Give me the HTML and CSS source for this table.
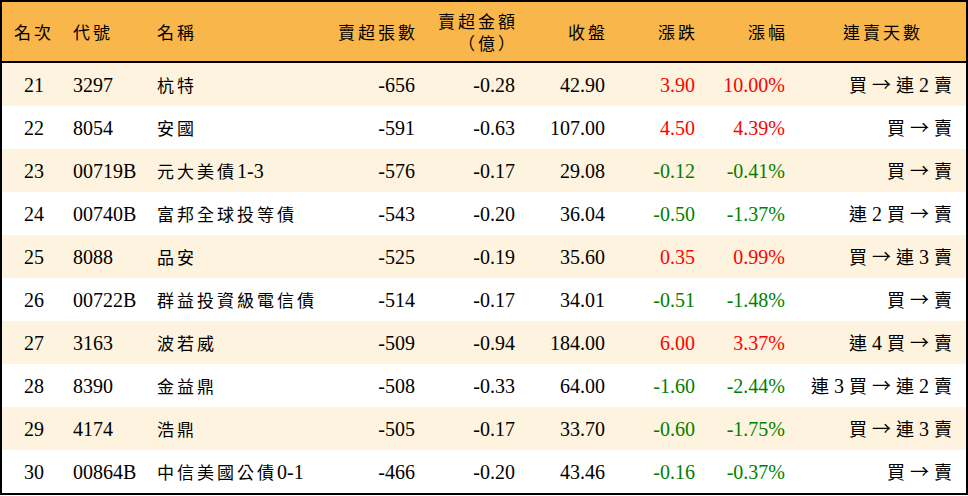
FILE: index.html
```html
<!DOCTYPE html>
<html lang="zh-Hant">
<head>
<meta charset="utf-8">
<title>賣超排行</title>
<link rel="stylesheet" href="styles.css">
</head>
<body>
<table class="rank">
  <colgroup>
    <col class="c-rank"><col class="c-code"><col class="c-name"><col class="c-vol"><col class="c-amt"><col class="c-close"><col class="c-chg"><col class="c-pct"><col class="c-days">
  </colgroup>
  <thead>
    <tr>
      <th class="ctr"><span class="zh">名次</span></th>
      <th class="lft"><span class="zh">代號</span></th>
      <th class="lft"><span class="zh">名稱</span></th>
      <th class="rgt"><span class="zh">賣超張數</span></th>
      <th class="rgt two"><span class="zh">賣超金額</span><br><span class="zh">（億）</span></th>
      <th class="rgt"><span class="zh">收盤</span></th>
      <th class="rgt"><span class="zh">漲跌</span></th>
      <th class="rgt"><span class="zh">漲幅</span></th>
      <th class="ctr"><span class="zh">連賣天數</span></th>
    </tr>
  </thead>
  <tbody>
    <tr class="alt">
      <td class="ctr">21</td><td class="lft">3297</td><td class="lft"><span class="zh">杭特</span></td>
      <td class="rgt">-656</td><td class="rgt">-0.28</td><td class="rgt">42.90</td>
      <td class="rgt up">3.90</td><td class="rgt up">10.00%</td>
      <td class="rgt days"><span class="zh">買</span> <span class="arr">→</span> <span class="zh">連</span> 2 <span class="zh">賣</span></td>
    </tr>
    <tr>
      <td class="ctr">22</td><td class="lft">8054</td><td class="lft"><span class="zh">安國</span></td>
      <td class="rgt">-591</td><td class="rgt">-0.63</td><td class="rgt">107.00</td>
      <td class="rgt up">4.50</td><td class="rgt up">4.39%</td>
      <td class="rgt days"><span class="zh">買</span> <span class="arr">→</span> <span class="zh">賣</span></td>
    </tr>
    <tr class="alt">
      <td class="ctr">23</td><td class="lft">00719B</td><td class="lft"><span class="zh">元大美債</span>1-3</td>
      <td class="rgt">-576</td><td class="rgt">-0.17</td><td class="rgt">29.08</td>
      <td class="rgt down">-0.12</td><td class="rgt down">-0.41%</td>
      <td class="rgt days"><span class="zh">買</span> <span class="arr">→</span> <span class="zh">賣</span></td>
    </tr>
    <tr>
      <td class="ctr">24</td><td class="lft">00740B</td><td class="lft"><span class="zh">富邦全球投等債</span></td>
      <td class="rgt">-543</td><td class="rgt">-0.20</td><td class="rgt">36.04</td>
      <td class="rgt down">-0.50</td><td class="rgt down">-1.37%</td>
      <td class="rgt days"><span class="zh">連</span> 2 <span class="zh">買</span> <span class="arr">→</span> <span class="zh">賣</span></td>
    </tr>
    <tr class="alt">
      <td class="ctr">25</td><td class="lft">8088</td><td class="lft"><span class="zh">品安</span></td>
      <td class="rgt">-525</td><td class="rgt">-0.19</td><td class="rgt">35.60</td>
      <td class="rgt up">0.35</td><td class="rgt up">0.99%</td>
      <td class="rgt days"><span class="zh">買</span> <span class="arr">→</span> <span class="zh">連</span> 3 <span class="zh">賣</span></td>
    </tr>
    <tr>
      <td class="ctr">26</td><td class="lft">00722B</td><td class="lft"><span class="zh">群益投資級電信債</span></td>
      <td class="rgt">-514</td><td class="rgt">-0.17</td><td class="rgt">34.01</td>
      <td class="rgt down">-0.51</td><td class="rgt down">-1.48%</td>
      <td class="rgt days"><span class="zh">買</span> <span class="arr">→</span> <span class="zh">賣</span></td>
    </tr>
    <tr class="alt">
      <td class="ctr">27</td><td class="lft">3163</td><td class="lft"><span class="zh">波若威</span></td>
      <td class="rgt">-509</td><td class="rgt">-0.94</td><td class="rgt">184.00</td>
      <td class="rgt up">6.00</td><td class="rgt up">3.37%</td>
      <td class="rgt days"><span class="zh">連</span> 4 <span class="zh">買</span> <span class="arr">→</span> <span class="zh">賣</span></td>
    </tr>
    <tr>
      <td class="ctr">28</td><td class="lft">8390</td><td class="lft"><span class="zh">金益鼎</span></td>
      <td class="rgt">-508</td><td class="rgt">-0.33</td><td class="rgt">64.00</td>
      <td class="rgt down">-1.60</td><td class="rgt down">-2.44%</td>
      <td class="rgt days"><span class="zh">連</span> 3 <span class="zh">買</span> <span class="arr">→</span> <span class="zh">連</span> 2 <span class="zh">賣</span></td>
    </tr>
    <tr class="alt">
      <td class="ctr">29</td><td class="lft">4174</td><td class="lft"><span class="zh">浩鼎</span></td>
      <td class="rgt">-505</td><td class="rgt">-0.17</td><td class="rgt">33.70</td>
      <td class="rgt down">-0.60</td><td class="rgt down">-1.75%</td>
      <td class="rgt days"><span class="zh">買</span> <span class="arr">→</span> <span class="zh">連</span> 3 <span class="zh">賣</span></td>
    </tr>
    <tr>
      <td class="ctr">30</td><td class="lft">00864B</td><td class="lft"><span class="zh">中信美國公債</span>0-1</td>
      <td class="rgt">-466</td><td class="rgt">-0.20</td><td class="rgt">43.46</td>
      <td class="rgt down">-0.16</td><td class="rgt down">-0.37%</td>
      <td class="rgt days"><span class="zh">買</span> <span class="arr">→</span> <span class="zh">賣</span></td>
    </tr>
  </tbody>
</table>
</body>
</html>
```

FILE: styles.css
```css
html, body {
  margin: 0;
  padding: 0;
  background: #ffffff;
}

.rank {
  width: 968px;
  table-layout: fixed;
  border-collapse: separate;
  border-spacing: 0;
  border: 2px solid #000;
  font-family: "Liberation Serif", "Noto Sans CJK TC", serif;
  font-size: 20px;
  line-height: 22px;
  color: #000;
}

.c-rank { width: 62px; }
.c-code { width: 86px; }
.c-name { width: 180px; }
.c-vol { width: 100px; }
.c-amt { width: 100px; }
.c-close { width: 90px; }
.c-chg { width: 90px; }
.c-pct { width: 90px; }
.c-days { width: 166px; }

.rank th {
  background: #f9b64a;
  height: 59px;
  padding: 0;
  font-weight: normal;
  border-bottom: 2px solid #000;
  vertical-align: middle;
  white-space: nowrap;
}

.rank td {
  height: 43px;
  padding: 0;
  vertical-align: middle;
  white-space: nowrap;
}

.rank tr.alt td {
  background: #fef3de;
}

.zh {
  font-family: "Noto Sans CJK TC", sans-serif;
  font-size: 17px;
  letter-spacing: 3px;
}

.days .zh {
  letter-spacing: 0;
  font-size: 18px;
}

.arr {
  font-family: "Noto Sans CJK TC", sans-serif;
  font-size: 19px;
}

.ctr { text-align: center; }
.lft { text-align: left; }
.rgt { text-align: right; }

.rank th.ctr:first-child,
.rank td.ctr { padding-left: 2px; }

.rank th.lft:nth-child(2),
.rank td.lft:nth-child(2) { padding-left: 9px; }

.rank th.lft:nth-child(3),
.rank td.lft:nth-child(3) { padding-left: 7px; }

.rank .rgt { padding-right: 15px; }
.rank th.rgt { padding-right: 12px; }

.rank td.days { padding-right: 14px; }

.up { color: #ff0000; }
.down { color: #008000; }
```
